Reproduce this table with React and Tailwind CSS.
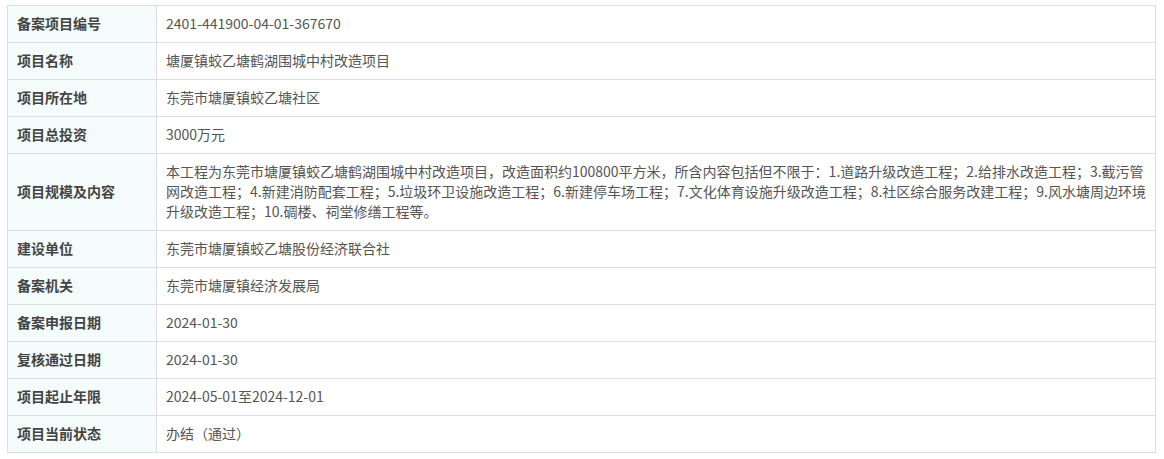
const ROWS = [
  ['备案项目编号', '2401-441900-04-01-367670'],
  ['项目名称', '塘厦镇蛟乙塘鹤湖围城中村改造项目'],
  ['项目所在地', '东莞市塘厦镇蛟乙塘社区'],
  ['项目总投资', '3000万元'],
  [
    '项目规模及内容',
    '本工程为东莞市塘厦镇蛟乙塘鹤湖围城中村改造项目，改造面积约100800平方米，所含内容包括但不限于：1.道路升级改造工程；2.给排水改造工程；3.截污管网改造工程；4.新建消防配套工程；5.垃圾环卫设施改造工程；6.新建停车场工程；7.文化体育设施升级改造工程；8.社区综合服务改建工程；9.风水塘周边环境升级改造工程；10.碉楼、祠堂修缮工程等。',
  ],
  ['建设单位', '东莞市塘厦镇蛟乙塘股份经济联合社'],
  ['备案机关', '东莞市塘厦镇经济发展局'],
  ['备案申报日期', '2024-01-30'],
  ['复核通过日期', '2024-01-30'],
  ['项目起止年限', '2024-05-01至2024-12-01'],
  ['项目当前状态', '办结（通过）'],
]

export default function App() {
  return (
    <div className="bg-white min-h-[459px] pl-[7px] pt-[5px] font-['Microsoft_YaHei','Noto_Sans_CJK_SC',sans-serif] text-[14px]">
      <table className="w-[1149px] border-collapse table-fixed">
        <colgroup>
          <col className="w-[149px]" />
          <col />
        </colgroup>
        <tbody>
          {ROWS.map(([label, value]) => (
            <tr key={label}>
              <td className="border border-[#dddddd] bg-[#f4fcfc] px-[9px] pt-[7px] pb-[9px] leading-5 font-bold text-[#444]">
                {label}
              </td>
              <td className="border border-[#dddddd] px-[9px] pt-[7px] pb-[9px] leading-5 text-[#555]">
                {value}
              </td>
            </tr>
          ))}
        </tbody>
      </table>
    </div>
  )
}
